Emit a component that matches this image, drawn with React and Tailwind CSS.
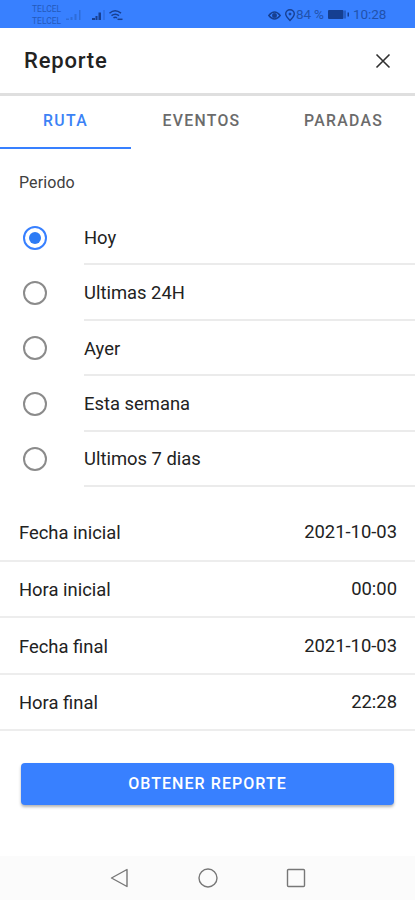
import React from "react";

const periods = ["Hoy", "Ultimas 24H", "Ayer", "Esta semana", "Ultimos 7 dias"];

const fields = [
  ["Fecha inicial", "2021-10-03"],
  ["Hora inicial", "00:00"],
  ["Fecha final", "2021-10-03"],
  ["Hora final", "22:28"],
];

function StatusBar() {
  return (
    <div className="flex h-7 shrink-0 items-start bg-[#3880ff] pl-8 pr-[29px] text-[#2152ac]">
      <div className="flex w-[27px] flex-col pt-[3px] text-[8.5px] leading-[12px] text-[#2459bb]">
        <span>TELCEL</span>
        <span>TELCEL</span>
      </div>
      <svg className="ml-[7px] mt-[9px]" width="58" height="12" viewBox="0 0 58 12">
        <g fill="#2c66d0">
          <path d="M0 9.500h3v1.500H0zM4.500 8h2v3h-2zM8.500 5h2v6h-2zM13 1h1.500v10H13z" opacity=".8" />
        </g>
        <g fill="#173f91">
          <path d="M26 9h3v2h-3zM29.500 7h2v4h-2zM32.500 3.500h2.500v7.500h-2.500z" />
          <path d="M37.500 1h1v10h-1z" opacity=".4" />
        </g>
        <g fill="none" stroke="#173f91" strokeWidth="1.500">
          <path d="M43.500 4.200q5.500-5 11.500 0M45.500 6.700q3.700-3 7.500 0M47.500 9q1.700-1.500 3.500 0" />
          <path d="M51.500 10.300h5" />
        </g>
      </svg>
      <div className="ml-auto flex h-full items-center pt-[2px] text-[13.500px] leading-none">
        <svg width="28" height="13" viewBox="0 0 28 13" fill="none" stroke="#173f91">
          <path d="M.8 6.500q5.700-7 11.400 0-5.700 7-11.400 0z" strokeWidth="1.400" />
          <circle cx="6.500" cy="6.500" r="2" fill="#173f91" />
          <path d="M22 11.500c-3-3-4.300-4.500-4.300-6.500a4.300 4.300 0 0 1 8.600 0c0 2-1.300 3.500-4.300 6.500z" strokeWidth="1.400" />
          <circle cx="22" cy="5" r="1" fill="#173f91" />
        </svg>
        <span className="w-[32px] whitespace-nowrap tracking-[-0.2px]">84 %</span>
        <svg width="22" height="10" viewBox="0 0 22 10" fill="#153f91">
          <rect width="15.500" height="9" rx="1" />
          <path d="M16.500 .5h1v8h-1zM19.500 2.500h1.500v4h-1.500z" />
        </svg>
        <span className="ml-[3px] w-[33px] whitespace-nowrap tracking-[-0.1px]">10:28</span>
      </div>
    </div>
  );
}

function Radio({ checked }) {
  return checked ? (
    <span className="flex size-6 items-center justify-center rounded-full border-2 border-[#3880ff]">
      <span className="size-3 rounded-full bg-[#2d7bf5]" />
    </span>
  ) : (
    <span className="size-6 rounded-full border-2 border-[#8b8b8b]" />
  );
}

export default function App() {
  return (
    <div className="flex h-[900px] w-[415px] flex-col overflow-hidden bg-white font-[Roboto,sans-serif] text-[#222]">
      <StatusBar />
      <header className="flex h-[68px] shrink-0 items-center justify-between border-b-[3px] border-[#dfdfdf] pl-6 pr-[24px]">
        <h1 className="text-[22px] font-medium tracking-[0.800px]">Reporte</h1>
        <svg width="16" height="16" viewBox="0 0 16 16" fill="none" stroke="#303030" strokeWidth="1.600">
          <path d="M1.500 1.500l13 13M14.500 1.500l-13 13" />
        </svg>
      </header>
      <nav className="flex h-[53px] shrink-0 text-[15.800px] font-medium tracking-[1.300px] text-[#6b6b6b]">
        <button className="w-[131px] border-b-2 border-[#3880ff] pb-[2px] text-[#3b82f6]">RUTA</button>
        <button className="w-[141px] pb-[4px]">EVENTOS</button>
        <button className="flex-1 pb-[4px]">PARADAS</button>
      </nav>
      <h2 className="h-[61px] shrink-0 pl-[19px] pt-[22px] text-[16px] leading-6 tracking-[0.1px] text-[#404040]">Periodo</h2>
      <ul className="flex shrink-0 flex-col">
        {periods.map((name, i) => (
          <li key={name} className="flex h-[55.400px] items-center pl-[23px]">
            <Radio checked={i === 0} />
            <span className="ml-[37px] flex h-full flex-1 items-center border-b-2 border-[#ebebeb] pt-[2px] text-[18.400px]">{name}</span>
          </li>
        ))}
      </ul>
      <dl className="mt-[18px] flex shrink-0 flex-col text-[18.400px]">
        {fields.map(([label, value]) => (
          <div key={label} className="flex h-[56.600px] items-center justify-between border-b-2 border-[#ededed] pl-[19px] pr-[18px] pt-[2px]">
            <dt>{label}</dt>
            <dd className="pb-[2px]">{value}</dd>
          </div>
        ))}
      </dl>
      <button className="mx-[21px] mt-8 h-[42px] shrink-0 rounded-[4px] bg-[#3880ff] text-[16px] font-medium tracking-[1.050px] text-white shadow-[0_2px_3px_rgba(0,0,0,0.3)]">
        OBTENER REPORTE
      </button>
      <footer className="mt-auto flex h-11 shrink-0 items-center justify-center bg-[#fbfbfb]">
        <svg width="196" height="22" viewBox="0 0 196 22" fill="none" stroke="#777" strokeWidth="1.400">
          <path d="M17 2.500v17L1.500 11z" strokeLinejoin="round" />
          <circle cx="98" cy="11" r="9" />
          <rect x="177.500" y="2.500" width="17" height="17" rx="1" />
        </svg>
      </footer>
    </div>
  );
}
